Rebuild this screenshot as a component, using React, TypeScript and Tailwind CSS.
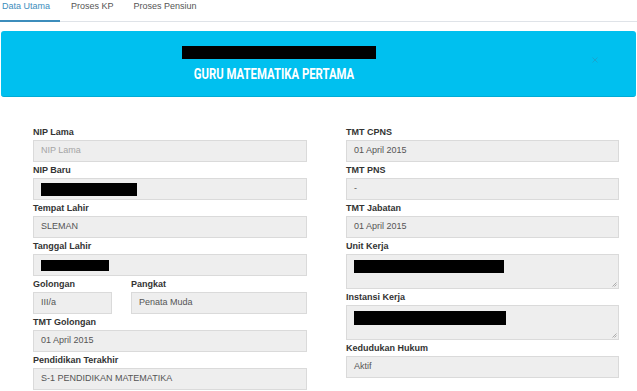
import React from "react";

type Field = {
  label: string;
  value?: string;
  placeholder?: string;
  redact?: number;
  redactH?: number;
  area?: boolean;
};

const LEFT: (Field | "split")[] = [
  { label: "NIP Lama", placeholder: "NIP Lama" },
  { label: "NIP Baru", redact: 96, redactH: 13 },
  { label: "Tempat Lahir", value: "SLEMAN" },
  { label: "Tanggal Lahir", redact: 68, redactH: 11 },
  "split",
  { label: "TMT Golongan", value: "01 April 2015" },
  { label: "Pendidikan Terakhir", value: "S-1 PENDIDIKAN MATEMATIKA" },
];

const RIGHT: Field[] = [
  { label: "TMT CPNS", value: "01 April 2015" },
  { label: "TMT PNS", value: "-" },
  { label: "TMT Jabatan", value: "01 April 2015" },
  { label: "Unit Kerja", redact: 150, redactH: 13, area: true },
  { label: "Instansi Kerja", redact: 152, redactH: 14, area: true },
  { label: "Kedudukan Hukum", value: "Aktif" },
];

function Label({ children }: { children: React.ReactNode }) {
  return <div className="h-[16px] text-[9px] leading-[16px] font-bold text-[#333]">{children}</div>;
}

function Box({ field }: { field: Field }) {
  if (field.area) {
    return (
      <div className="relative h-[35px] bg-[#eeeeee] border border-[#dadada] pl-[7px] pt-[5px]">
        <div className="bg-black" style={{ width: field.redact, height: field.redactH }} />
        <svg className="absolute right-[1px] bottom-[1px]" width="6" height="6" viewBox="0 0 6 6">
          <path d="M5.5 1.5 L1.5 5.5 M5.5 3.5 L3.5 5.5" stroke="#9a9a9a" strokeWidth="0.8" />
        </svg>
      </div>
    );
  }
  return (
    <div className="h-[22px] bg-[#eeeeee] border border-[#dadada] pl-[7px] flex items-center text-[9px]">
      {field.redact ? (
        <div className="bg-black" style={{ width: field.redact, height: field.redactH }} />
      ) : field.placeholder ? (
        <span className="text-[#a5a5a5]">{field.placeholder}</span>
      ) : (
        <span className="text-[#555]">{field.value}</span>
      )}
    </div>
  );
}

export default function App() {
  return (
    <div className="w-[637px] h-[391px] overflow-hidden bg-white font-['Liberation_Sans',Arial,sans-serif]">
      <nav className="flex border-b border-[#dfe3e8] text-[9px] leading-[13px]">
        <span className="pl-[2px] pr-[10px] pb-[7px] -mb-px border-b-2 border-[#3c8dbc] text-[#3c8dbc]">Data Utama</span>
        <span className="px-[10px] pb-[7px] ml-px text-[#555]">Proses KP</span>
        <span className="px-[10px] pb-[7px] text-[#555]">Proses Pensiun</span>
      </nav>

      <div className="relative mt-[9px] mx-px h-[66px] rounded-[3px] bg-[#00c0ef] border-b border-[#00acd6] pr-[80px] pt-[15px] flex flex-col items-center">
        <div className="w-[194px] h-[13px] bg-black" />
        <div className="mt-[7px] mr-[9px] font-['Roboto',sans-serif] font-bold text-[14px] leading-[16px] scale-x-[0.81] text-white">
          GURU MATEMATIKA PERTAMA
        </div>
        <svg className="absolute right-[38px] top-[26px]" width="6" height="6" viewBox="0 0 6 6">
          <path d="M0.5 0.5 L5.5 5.5 M5.5 0.5 L0.5 5.5" stroke="#1aa3cc" strokeWidth="0.9" />
        </svg>
      </div>

      <div className="flex gap-[39px] pl-[33px] pt-[27px]">
        <div className="w-[274px]">
          {LEFT.map((f, i) =>
            f === "split" ? (
              <div key={i} className="flex gap-[19px]">
                <div className="w-[79px]">
                  <Label>Golongan</Label>
                  <Box field={{ label: "Golongan", value: "III/a" }} />
                </div>
                <div className="flex-1">
                  <Label>Pangkat</Label>
                  <Box field={{ label: "Pangkat", value: "Penata Muda" }} />
                </div>
              </div>
            ) : (
              <div key={i}>
                <Label>{f.label}</Label>
                <Box field={f} />
              </div>
            ),
          )}
        </div>
        <div className="w-[273px]">
          {RIGHT.map((f, i) => (
            <div key={i}>
              <Label>{f.label}</Label>
              <Box field={f} />
            </div>
          ))}
        </div>
      </div>
    </div>
  );
}
